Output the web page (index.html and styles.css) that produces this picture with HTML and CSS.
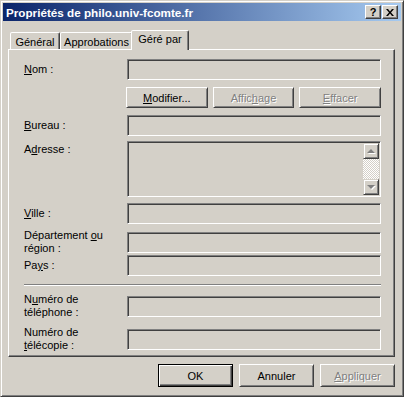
FILE: index.html
```html
<!DOCTYPE html>
<html lang="fr">
<head>
  <meta charset="UTF-8" />
  <title>Propriétés de philo.univ-fcomte.fr</title>
  <link rel="stylesheet" href="styles.css">
</head>
<body>
  <div class="window">
    <div class="caption">
      <span class="caption-title">Propriétés de philo.univ-fcomte.fr</span>
      <div class="caption-buttons">
        <button class="cap-btn help">?</button>
        <button class="cap-btn">
          <svg width="8" height="7" viewBox="0 0 8 7">
            <path d="M0 0h2l2 2.4L6 0h2L5 3.5 8 7H6L4 4.6 2 7H0l3-3.5z" fill="#000"/>
          </svg>
        </button>
      </div>
    </div>

    <div class="client">
      <div class="tabs">
        <div class="tab tab-general">Général</div>
        <div class="tab tab-approb">Approbations</div>
        <div class="tab active">Géré par</div>
      </div>

      <div class="panel">
        <div class="row r-nom">
          <label><u>N</u>om :</label>
          <div class="field"></div>
        </div>
        <div class="row r-actions">
          <span></span>
          <div class="actions">
            <button class="btn"><u>M</u>odifier...</button>
            <button class="btn disabled">Affic<u>h</u>age</button>
            <button class="btn disabled"><u>E</u>ffacer</button>
          </div>
        </div>
        <div class="row r-bureau">
          <label><u>B</u>ureau :</label>
          <div class="field"></div>
        </div>
        <div class="row r-adresse">
          <label>A<u>d</u>resse :</label>
          <div class="field field-multi">
            <div class="scrollbar">
              <div class="scroll-btn"><span class="arrow up"></span></div>
              <div class="scroll-track"></div>
              <div class="scroll-btn"><span class="arrow down"></span></div>
            </div>
          </div>
        </div>
        <div class="row r-ville">
          <label><u>V</u>ille :</label>
          <div class="field"></div>
        </div>
        <div class="row r-dept">
          <label>Département <u>o</u>u<br>région :</label>
          <div class="field"></div>
        </div>
        <div class="row r-pays">
          <label>Pa<u>y</u>s :</label>
          <div class="field"></div>
        </div>

        <div class="separator"></div>

        <div class="row r-tel">
          <label>N<u>u</u>méro de<br>téléphone :</label>
          <div class="field"></div>
        </div>
        <div class="row r-fax">
          <label>Numéro de<br><u>t</u>élécopie :</label>
          <div class="field"></div>
        </div>
      </div>

      <div class="footer">
        <button class="btn big default">OK</button>
        <button class="btn big">Annuler</button>
        <button class="btn big disabled"><u>A</u>ppliquer</button>
      </div>
    </div>
  </div>
</body>
</html>
```

FILE: styles.css
```css
* {
  box-sizing: border-box;
}

body {
  margin: 0;
  background: #d4d0c8;
  font-family: "Liberation Sans", Arial, sans-serif;
  font-size: 11px;
  color: #000;
}

.window {
  width: 404px;
  height: 397px;
  background: #d4d0c8;
  border: 1px solid;
  border-color: #d4d0c8 #404040 #404040 #d4d0c8;
  box-shadow: inset 1px 1px #fff, inset -1px -1px #808080;
  padding: 2px;
}

/* title bar */
.caption {
  height: 18px;
  display: flex;
  align-items: center;
  justify-content: space-between;
  padding: 0 3px 0 3px;
  background: linear-gradient(to right, #0a246a, #a6caf0);
}

.caption-title {
  color: #fff;
  font-weight: bold;
  font-size: 11.7px;
  white-space: nowrap;
}

.caption-buttons {
  display: flex;
  gap: 1px;
}

.cap-btn {
  width: 16px;
  height: 14px;
  padding: 0;
  display: flex;
  align-items: center;
  justify-content: center;
  background: #d4d0c8;
  border: 1px solid;
  border-color: #fff #404040 #404040 #fff;
  box-shadow: inset -1px -1px #808080;
  font-family: "Liberation Sans", Arial, sans-serif;
  font-size: 11px;
  font-weight: bold;
  line-height: 1;
}

.cap-btn.help {
  padding-top: 1px;
}

/* client area */
.client {
  padding: 9px 6px 0 5px;
}

.tabs {
  height: 19px;
  display: flex;
  align-items: flex-end;
  padding-left: 2px;
}

.tab {
  height: 17px;
  display: flex;
  align-items: center;
  justify-content: center;
  padding-top: 1px;
  border: 1px solid;
  border-bottom: none;
  border-color: #fff #404040 transparent #fff;
  border-radius: 2px 2px 0 0;
  box-shadow: inset -1px 0 #808080;
  background: #d4d0c8;
  white-space: nowrap;
}

.tab-general {
  width: 50px;
}

.tab-approb {
  width: 73px;
}

.tab.active {
  position: relative;
  z-index: 1;
  width: 58px;
  height: 20px;
  margin-left: -2px;
  margin-bottom: -1px;
  align-items: flex-start;
  padding-top: 2px;
}

.panel {
  height: 308px;
  border: 1px solid;
  border-color: #fff #404040 #404040 #fff;
  box-shadow: inset -1px -1px #808080;
  padding: 9px 0 0 15px;
}

.row {
  display: grid;
  grid-template-columns: 103px 254px;
  height: 21px;
  align-items: center;
}

.row label {
  line-height: 13px;
  white-space: nowrap;
}

.r-actions,
.r-bureau {
  margin-top: 7px;
}

.r-adresse {
  height: 56px;
  margin-top: 5px;
  align-items: start;
}

.r-adresse label {
  padding-top: 2px;
}

.r-ville {
  margin-top: 6px;
}

.r-dept,
.r-pays {
  margin-top: 5px;
}

.r-tel {
  margin-top: 7px;
}

.r-fax {
  margin-top: 12px;
}

.separator {
  width: 357px;
  height: 2px;
  margin-top: 8px;
  border-top: 1px solid #808080;
  border-bottom: 1px solid #fff;
}

.field {
  height: 21px;
  background: #d4d0c8;
  border: 1px solid;
  border-color: #808080 #fff #fff #808080;
  box-shadow: inset 1px 1px #404040, inset -1px -1px #d4d0c8;
}

.field-multi {
  height: 56px;
  display: flex;
  justify-content: flex-end;
  padding: 1px;
}

.scrollbar {
  width: 16px;
  display: flex;
  flex-direction: column;
}

.scroll-btn {
  height: 16px;
  display: flex;
  align-items: center;
  justify-content: center;
  border: 1px solid;
  border-color: #d4d0c8 #404040 #404040 #d4d0c8;
  box-shadow: inset 1px 1px #fff, inset -1px -1px #808080;
  background: #d4d0c8;
}

.scroll-track {
  flex: 1;
  background: repeating-conic-gradient(#fff 0 25%, #d4d0c8 0 50%) 0 0 / 2px 2px;
}

.arrow {
  width: 0;
  height: 0;
  border-left: 4px solid transparent;
  border-right: 4px solid transparent;
  filter: drop-shadow(1px 1px 0 #fff);
}

.arrow.up {
  border-bottom: 4px solid #808080;
  margin-top: -1px;
}

.arrow.down {
  border-top: 4px solid #808080;
}

/* buttons */
.btn {
  height: 21px;
  padding: 0;
  background: #d4d0c8;
  border: 1px solid;
  border-color: #fff #404040 #404040 #fff;
  box-shadow: inset 1px 1px #d4d0c8, inset -1px -1px #808080;
  font-family: inherit;
  font-size: 11px;
  color: #000;
  white-space: nowrap;
}

.btn.disabled {
  color: #808080;
  text-shadow: 1px 1px 0 #fff;
}

.actions {
  display: grid;
  grid-template-columns: repeat(3, 1fr);
  gap: 5px;
  margin-left: -1px;
}

.footer {
  display: flex;
  justify-content: flex-end;
  gap: 6px;
  margin-top: 7px;
}

.btn.big {
  width: 75px;
  height: 23px;
}

.btn.default {
  border-color: #000;
  box-shadow: inset 1px 1px #fff, inset -1px -1px #404040, inset -2px -2px #808080;
}
```
